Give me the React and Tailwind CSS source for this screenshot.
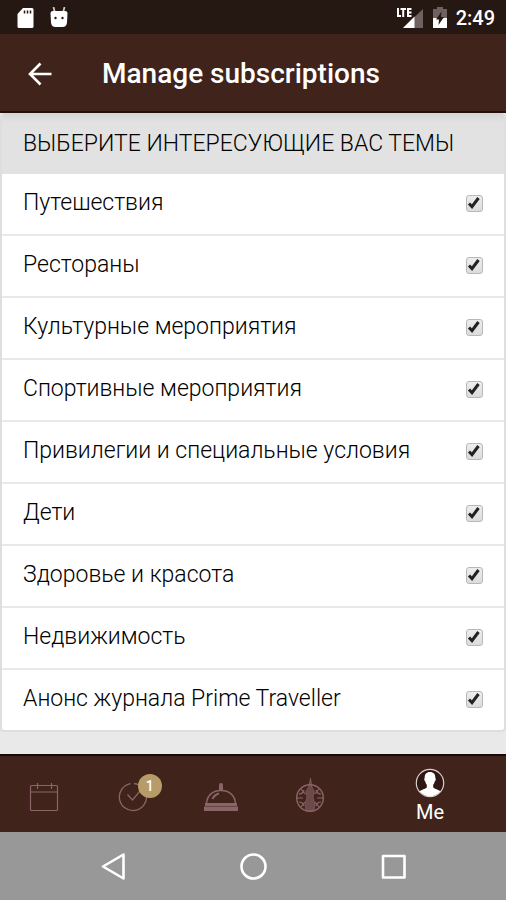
import { useState } from 'react';

const TOPICS = [
  'Путешествия',
  'Рестораны',
  'Культурные мероприятия',
  'Спортивные мероприятия',
  'Привилегии и специальные условия',
  'Дети',
  'Здоровье и красота',
  'Недвижимость',
  'Анонс журнала Prime Traveller',
];

function StatusBar() {
  return (
    <div className="flex h-[34px] items-center justify-between bg-[#251711] pt-[2px] pr-[11px] pl-4 text-white">
      <div className="flex items-center gap-4">
        <svg viewBox="0 0 18 22" className="h-[22px] w-[18px]">
          <path d="M7 1h9a1.500 1.500 0 0 1 1.500 1.500v17a1.500 1.500 0 0 1-1.500 1.500H3a1.500 1.500 0 0 1-1.500-1.500V7z" fill="#fff" />
          <path d="M8.500 3.500v3M11.500 3.500v3M14.500 3.500v3" stroke="#251711" strokeWidth="1.500" />
        </svg>
        <svg viewBox="0 0 18 22" className="h-[22px] w-[18px]">
          <path d="M3.500 0l1.500 6M14.500 0l-1.500 6" stroke="#cfcac8" strokeWidth="1.800" />
          <path d="M.5 6Q.5 4 3 4h12q2.500 0 2.500 2l-.5 9.500q-.5 4.500-4.500 4.500h-7Q1.500 20 1 15.500z" fill="#fff" />
          <circle cx="5.500" cy="11" r="1.200" fill="#251711" />
          <circle cx="12.500" cy="11" r="1.200" fill="#251711" />
        </svg>
      </div>
      <div className="flex items-center gap-2">
        <svg viewBox="0 0 28 22" className="h-[22px] w-7">
          <path d="M27 2v19H7z" fill="#6d6260" />
          <path d="M18.500 9.500V21H7z" fill="#fff" />
          <path d="M0 0h16v10.500H0z" fill="#251711" />
          <path d="M2 1v8h3M4.500 2h5.500M7.200 2v8M15.500 2h-3.500v7h3.500M12 5.500h3.500" fill="none" stroke="#fff" strokeWidth="2" />
        </svg>
        <svg viewBox="0 0 16 22" className="h-[22px] w-4">
          <path d="M5 0h6v2h4v9H1V2h4z" fill="#6d6260" />
          <path d="M1 11h14v10H1z" fill="#fff" />
          <path d="M9.500 4.500L4 12.500h3L6.500 18l5.500-8H9z" fill="#251711" />
        </svg>
        <span className="text-[20px] leading-6 font-medium">2:49</span>
      </div>
    </div>
  );
}

function Header() {
  return (
    <header className="flex h-[79px] items-center border-b-2 border-[#260f0c] bg-[#40241c] pt-[2px] pl-5 text-white">
      <button type="button" aria-label="Back" className="flex h-10 w-10 items-center justify-center">
        <svg viewBox="0 0 26 26" className="h-[26px] w-[26px]" fill="none" stroke="currentColor" strokeWidth="2.600">
          <path d="M24.500 13H3M13.500 2.500L3 13l10.500 10.500" />
        </svg>
      </button>
      <h1 className="ml-[42px] text-[28px] leading-8 font-medium">Manage subscriptions</h1>
    </header>
  );
}

function TopicRow({ label, checked, onChange }) {
  return (
    <li className="border-b-2 border-[#e8e8e8] last:border-b-0">
      <label className="flex h-[60px] items-center justify-between px-[21px] pb-[2px]">
        <span>{label}</span>
        <span className="grid h-[18px] w-[18px] place-items-center">
          <input
            type="checkbox"
            checked={checked}
            onChange={onChange}
            className="peer col-start-1 row-start-1 h-[17px] w-[17px] appearance-none rounded-[3px] border border-[#b8b8b8] bg-linear-to-b from-[#ededed] to-[#dcdcdc]"
          />
          <svg
            viewBox="0 0 18 18"
            className="pointer-events-none invisible col-start-1 row-start-1 h-[18px] w-[18px] peer-checked:visible"
          >
            <path d="M4 9.500l3 3.200L13.500 4" fill="none" stroke="#222" strokeWidth="3" />
          </svg>
        </span>
      </label>
    </li>
  );
}

function CalendarIcon() {
  return (
    <svg viewBox="0 0 30 30" className="h-[30px] w-[30px]" fill="none" stroke="currentColor" strokeWidth="1.200">
      <rect x="1.500" y="3.500" width="27" height="25" rx="1" />
      <path d="M1.500 10h27M8.500 1v6M22.500 1v6" />
    </svg>
  );
}

function CheckCircleIcon() {
  return (
    <svg viewBox="0 0 30 30" className="h-[30px] w-[30px]" fill="none" stroke="currentColor" strokeWidth="1.300">
      <path d="M12.500 1.600a13.600 13.600 0 1 0 16 12M16 1.500a13.600 13.600 0 0 1 12.500 13" />
      <path d="M9.500 12.500l5 5.500L22 9" />
    </svg>
  );
}

function BellIcon() {
  return (
    <svg viewBox="0 0 36 30" className="h-[30px] w-9" fill="none" stroke="currentColor" strokeWidth="1.500">
      <path d="M3.500 21.500C4 13 10 8.500 18 8.500S32 13 32.500 21.500" />
      <path d="M9.500 17q1.500-4 6.500-5.500" strokeWidth="2" />
      <circle cx="18" cy="3" r="2" fill="currentColor" stroke="none" />
      <path d="M16 4h4v4.500h-4zM1 24.500h34V29H1z" fill="currentColor" stroke="none" />
      <path d="M2 22.500h32" strokeWidth="3" />
    </svg>
  );
}

function CompassIcon() {
  return (
    <svg viewBox="0 0 30 36" className="h-9 w-[30px]" fill="none" stroke="currentColor">
      <circle cx="15" cy="21" r="13.300" strokeWidth="1.400" />
      <path d="M15.500 1l1.500 9 2.500 5-1.500 5 2 7-1 7h-8l-1-7 2-7-1.500-5 3-5z" fill="currentColor" fillOpacity=".6" strokeWidth=".6" />
      <path d="M2 21h6M22 21h6M6 12l4 5M24 12l-4 5M6 30l4-5M24 30l-4-5" strokeWidth="1.200" />
      <path d="M4 17q4 0 5-4M26 17q-4 0-5-4M4 25q4 0 5 4M26 25q-4 0-5 4" strokeWidth="1.200" />
    </svg>
  );
}

function ProfileIcon() {
  return (
    <svg viewBox="0 0 30 30" className="h-[30px] w-[30px]">
      <circle cx="15" cy="15" r="13.700" fill="#301812" stroke="#d8cecb" strokeWidth="1.200" />
      <path
        d="M15 4c3.800 0 5.500 2.500 5.300 6 .7.500.6 2.500-.5 3.300-.3 1.700-.8 2.500-1.600 3.400v2.800c1.500 1.700 5 2 7.300 3.700A13.500 13.500 0 0 1 4.500 23.200c2.300-1.700 5.800-2 7.300-3.700v-2.800c-.8-.9-1.300-1.700-1.600-3.400-1.100-.8-1.200-2.800-.5-3.300C9.500 6.500 11.200 4 15 4z"
        fill="#fff"
      />
    </svg>
  );
}

function TabBar() {
  return (
    <nav className="grid h-[78px] grid-cols-[7fr_7fr_7fr_7fr_12fr] items-center border-t-2 border-[#150a07] bg-[#40241c] pt-[6px] text-[#8b6468]">
      <a href="#calendar" aria-label="Calendar" className="flex justify-center">
        <CalendarIcon />
      </a>
      <a href="#requests" aria-label="Requests" className="flex justify-center">
        <span className="relative">
          <CheckCircleIcon />
          <span className="absolute -top-2 left-5 flex h-6 w-6 items-center justify-center rounded-full bg-[#b79b68] text-[14px] leading-4 font-medium text-white">
            1
          </span>
        </span>
      </a>
      <a href="#concierge" aria-label="Concierge" className="flex justify-center">
        <BellIcon />
      </a>
      <a href="#explore" aria-label="Explore" className="flex justify-center pb-1">
        <CompassIcon />
      </a>
      <a href="#me" className="flex flex-col items-center text-white">
        <ProfileIcon />
        <span className="text-[20px] leading-7">Me</span>
      </a>
    </nav>
  );
}

function SystemNav() {
  return (
    <div className="grid h-[68px] grid-cols-3 place-items-center bg-[#989898] px-[43px]">
      <button type="button" aria-label="System back">
        <svg viewBox="0 0 28 28" className="h-7 w-7" fill="none" stroke="#fff" strokeWidth="2.600" strokeLinejoin="round">
          <path d="M24.500 2.500v24L4 14.500z" />
        </svg>
      </button>
      <button type="button" aria-label="Home">
        <svg viewBox="0 0 28 28" className="h-7 w-7" fill="none" stroke="#fff" strokeWidth="2.600">
          <circle cx="14.500" cy="14.500" r="12" />
        </svg>
      </button>
      <button type="button" aria-label="Recent apps">
        <svg viewBox="0 0 28 28" className="h-7 w-7" fill="none" stroke="#fff" strokeWidth="2.600" strokeLinejoin="round">
          <rect x="4" y="4" width="21.500" height="21.500" />
        </svg>
      </button>
    </div>
  );
}

export default function App() {
  const [selected, setSelected] = useState(TOPICS);

  const toggle = (topic) => {
    setSelected((prev) => (prev.includes(topic) ? prev.filter((t) => t !== topic) : [...prev, topic]));
  };

  return (
    <div className="flex min-h-screen flex-col bg-[#e9e9e9] font-['Roboto',sans-serif]">
      <StatusBar />
      <Header />
      <main className="flex-1 text-[23px] leading-7 font-light text-black">
        <section className="overflow-hidden rounded-[4px] border-x-2 border-b-2 border-[#dedede] bg-white">
          <h2 className="flex h-[61px] items-center bg-linear-to-b from-[#d4d4d4] to-[#e2e2e2] to-15% px-[21px] font-light">
            ВЫБЕРИТЕ ИНТЕРЕСУЮЩИЕ ВАС ТЕМЫ
          </h2>
          <ul>
            {TOPICS.map((topic) => (
              <TopicRow
                key={topic}
                label={topic}
                checked={selected.includes(topic)}
                onChange={() => toggle(topic)}
              />
            ))}
          </ul>
        </section>
      </main>
      <TabBar />
      <SystemNav />
    </div>
  );
}
